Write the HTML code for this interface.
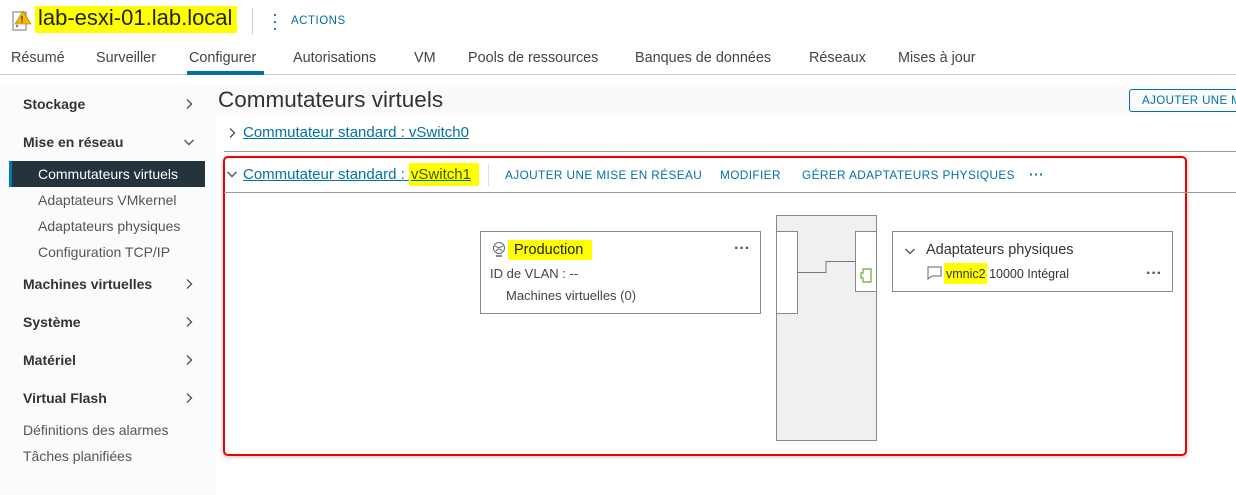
<!DOCTYPE html>
<html><head><meta charset="utf-8"><style>
*{box-sizing:border-box;margin:0;padding:0}
body{width:1236px;height:495px;overflow:hidden;background:#fff;font-family:"Liberation Sans",sans-serif;color:#333;position:relative}
.a{position:absolute;white-space:nowrap}
.hl{background:#ffff00}
.tab{position:absolute;top:50px;font-size:14.4px;color:#444}
.side{position:absolute;left:0;top:84px;width:215px;height:411px;background:#fafbfc}
.sh{position:absolute;left:23px;font-size:14px;font-weight:bold;color:#333}
.si{position:absolute;left:38px;font-size:14px;color:#555}
.chev{position:absolute;left:183px}
.lnk{color:#0072a3;text-decoration:underline;font-size:15px}
.btn{position:absolute;top:168px;font-size:11.8px;color:#0072a3;letter-spacing:.4px}
</style></head><body>
<svg width="0" height="0" style="position:absolute"><defs>
<symbol id="r" viewBox="0 0 12 12"><path d="M4 1.5 L8.5 6 L4 10.5" fill="none" stroke="#555" stroke-width="1.4"/></symbol>
<symbol id="d" viewBox="0 0 12 12"><path d="M1.5 4 L6 8.5 L10.5 4" fill="none" stroke="#555" stroke-width="1.4"/></symbol>
</defs></svg>
<svg class="a" style="left:12px;top:10px" width="20" height="22" viewBox="0 0 20 22"><rect x="1" y="2" width="13" height="18" fill="#fff" stroke="#777"/><circle cx="5" cy="16" r="1.2" fill="#777"/><path d="M11 1 L19 14 L3 14 Z" fill="#f5b800" stroke="#a77b00" stroke-width=".6"/><text x="10" y="12.5" font-size="9" font-weight="bold" text-anchor="middle" fill="#333">!</text></svg>
<div class="a hl" style="left:35px;top:6px;height:27px;width:202px"></div>
<div class="a" style="left:38px;top:5px;font-size:22px;color:#222">lab-esxi-01.lab.local</div>
<div class="a" style="left:252px;top:8px;width:1px;height:26px;background:#ccc"></div>
<div class="a" style="left:272px;top:11px;color:#0072a3;font-size:18px;line-height:7px">·<br>·<br>·</div>
<div class="a" style="left:291px;top:15px;font-size:11.5px;color:#0072a3;letter-spacing:.5px">ACTIONS</div>
<div class="tab" style="left:11px">Résumé</div>
<div class="tab" style="left:96px">Surveiller</div>
<div class="tab" style="left:189px">Configurer</div>
<div class="tab" style="left:293px">Autorisations</div>
<div class="tab" style="left:414px">VM</div>
<div class="tab" style="left:468px">Pools de ressources</div>
<div class="tab" style="left:635px">Banques de données</div>
<div class="tab" style="left:809px">Réseaux</div>
<div class="tab" style="left:898px">Mises à jour</div>
<div class="a" style="left:0;top:74px;width:1236px;height:1px;background:#ccc"></div>
<div class="a" style="left:187px;top:71px;width:77px;height:4px;background:#0072a3"></div>
<div class="side"></div>
<div class="a" style="left:215px;top:84px;width:1021px;height:32px;background:#fafafa"></div>
<div class="sh" style="top:96px">Stockage</div><svg class="chev" style="top:98px" width="12" height="12"><use href="#r"/></svg>
<div class="sh" style="top:134px">Mise en réseau</div><svg class="chev" style="top:136px" width="12" height="12"><use href="#d"/></svg>
<div class="a" style="left:9px;top:161px;width:196px;height:26px;background:#25333d"></div>
<div class="a" style="left:9px;top:161px;width:3px;height:26px;background:#0079b8"></div>
<div class="si" style="top:166px;color:#fff">Commutateurs virtuels</div>
<div class="si" style="top:192px">Adaptateurs VMkernel</div>
<div class="si" style="top:218px">Adaptateurs physiques</div>
<div class="si" style="top:244px">Configuration TCP/IP</div>
<div class="sh" style="top:276px">Machines virtuelles</div><svg class="chev" style="top:278px" width="12" height="12"><use href="#r"/></svg>
<div class="sh" style="top:314px">Système</div><svg class="chev" style="top:316px" width="12" height="12"><use href="#r"/></svg>
<div class="sh" style="top:352px">Matériel</div><svg class="chev" style="top:354px" width="12" height="12"><use href="#r"/></svg>
<div class="sh" style="top:390px">Virtual Flash</div><svg class="chev" style="top:392px" width="12" height="12"><use href="#r"/></svg>
<div class="a" style="left:23px;top:422px;font-size:14px;color:#555">Définitions des alarmes</div>
<div class="a" style="left:23px;top:448px;font-size:14px;color:#555">Tâches planifiées</div>
<div class="a" style="left:218px;top:87px;font-size:22.5px;color:#333">Commutateurs virtuels</div>
<div class="a" style="left:1129px;top:89px;width:120px;height:23px;border:1px solid #0072a3;border-radius:3px;font-size:11.5px;color:#0072a3;padding:5px 12px;letter-spacing:.4px">AJOUTER UNE MISE</div>
<svg class="a" style="left:226px;top:127px" width="12" height="12"><use href="#r"/></svg>
<div class="a lnk" style="left:243px;top:124px">Commutateur standard : vSwitch0</div>
<div class="a" style="left:224px;top:151px;width:1012px;height:1px;background:#999"></div>
<div class="a" style="left:223px;top:156px;width:964px;height:300px;border:2px solid #e00;border-radius:5px;box-shadow:0 1px 4px rgba(0,0,0,.25)"></div>
<svg class="a" style="left:226px;top:168px" width="12" height="12"><use href="#d"/></svg>
<div class="a lnk" style="left:243px;top:166px">Commutateur standard : <span style="color:#3a5a00;background:#ff0;padding:3px 8px 3px 2px">vSwitch1</span></div>
<div class="a" style="left:488px;top:164px;width:1px;height:22px;background:#ddd"></div>
<div class="btn" style="left:505px">AJOUTER UNE MISE EN RÉSEAU</div>
<div class="btn" style="left:720px">MODIFIER</div>
<div class="btn" style="left:802px">GÉRER ADAPTATEURS PHYSIQUES</div>
<div class="btn" style="left:1029px;font-weight:bold;font-size:14px;top:166px">···</div>
<div class="a" style="left:224px;top:192px;width:1012px;height:1px;background:#999"></div>
<div class="a" style="left:480px;top:231px;width:281px;height:83px;border:1px solid #888;background:#fff"></div>
<svg class="a" style="left:492px;top:242px" width="14" height="16" viewBox="0 0 14 16"><circle cx="7" cy="6" r="5.5" fill="none" stroke="#666"/><path d="M3 4 Q7 7 11 4 M4 9 Q7 5 10 9" fill="none" stroke="#666"/><path d="M4 14 H10" stroke="#666" stroke-width="1.5"/></svg>
<div class="a hl" style="left:508px;top:240px;width:84px;height:20px"></div>
<div class="a" style="left:514px;top:242px;font-size:14.5px;color:#222">Production</div>
<div class="a" style="left:734px;top:240px;font-size:16px;font-weight:bold;color:#555">···</div>
<div class="a" style="left:490px;top:266px;font-size:13px;color:#444">ID de VLAN : --</div>
<div class="a" style="left:506px;top:288px;font-size:13px;color:#444">Machines virtuelles (0)</div>
<div class="a" style="left:776px;top:215px;width:101px;height:226px;background:#f0f0f0;border:1px solid #888"></div>
<div class="a" style="left:776px;top:231px;width:22px;height:83px;background:#fff;border:1px solid #888"></div>
<div class="a" style="left:855px;top:231px;width:22px;height:61px;background:#fff;border:1px solid #888"></div>
<svg class="a" style="left:797px;top:255px" width="60" height="20"><path d="M0 17.5 H29 V6.5 H58" fill="none" stroke="#777"/></svg>
<svg class="a" style="left:860px;top:268px" width="14" height="16"><path d="M3 1 H11 V14 H3 V10 H1 V5 H3 Z" fill="none" stroke="#6a3" stroke-width="1.2"/></svg>
<div class="a" style="left:892px;top:231px;width:281px;height:61px;border:1px solid #888"></div>
<svg class="a" style="left:904px;top:245px" width="12" height="12"><use href="#d"/></svg>
<div class="a" style="left:926px;top:242px;font-size:14.5px;color:#333">Adaptateurs physiques</div>
<svg class="a" style="left:927px;top:266px" width="16" height="14"><path d="M1 1 H14 V10 H5 L1 13 Z" fill="none" stroke="#666"/></svg>
<div class="a hl" style="left:944px;top:263px;width:43px;height:21px"></div>
<div class="a" style="left:946px;top:267px;font-size:12.5px;color:#333">vmnic2 <span>10000 Intégral</span></div>
<div class="a" style="left:1146px;top:265px;font-size:16px;font-weight:bold;color:#555">···</div>
</body></html>
